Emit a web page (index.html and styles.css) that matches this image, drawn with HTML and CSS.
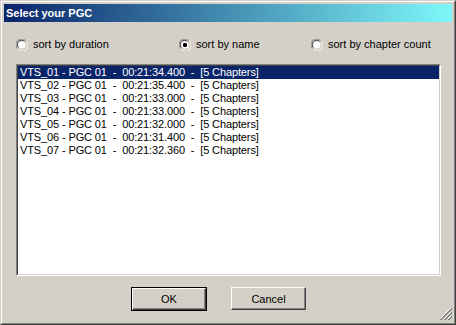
FILE: index.html
```html
<!DOCTYPE html>
<html lang="en">
<head>
  <meta charset="UTF-8" />
  <title>Select your PGC</title>
  <link rel="stylesheet" href="styles.css">
</head>
<body>
<div class="window">
  <div class="frame">
    <div class="titlebar">Select your PGC</div>
    <div class="content">
      <div class="sort-row">
        <label class="radio">
          <svg width="12" height="12" viewBox="0 0 12 12"><path d="M1.5 9.5 A5 5 0 0 1 9.5 1.5" fill="none" stroke="#808080"/><path d="M2.5 8.5 A3.6 3.6 0 0 1 8.5 2.5" fill="none" stroke="#404040"/><path d="M10.5 2.5 A5 5 0 0 1 2.5 10.5" fill="none" stroke="#fff"/><circle cx="6" cy="6" r="3.6" fill="#fff"/></svg>
          <span>sort by duration</span>
        </label>
        <label class="radio">
          <svg width="12" height="12" viewBox="0 0 12 12"><path d="M1.5 9.5 A5 5 0 0 1 9.5 1.5" fill="none" stroke="#808080"/><path d="M2.5 8.5 A3.6 3.6 0 0 1 8.5 2.5" fill="none" stroke="#404040"/><path d="M10.5 2.5 A5 5 0 0 1 2.5 10.5" fill="none" stroke="#fff"/><circle cx="6" cy="6" r="3.6" fill="#fff"/><rect x="4" y="4" width="4" height="4" rx="1.2" fill="#000"/></svg>
          <span>sort by name</span>
        </label>
        <label class="radio">
          <svg width="12" height="12" viewBox="0 0 12 12"><path d="M1.5 9.5 A5 5 0 0 1 9.5 1.5" fill="none" stroke="#808080"/><path d="M2.5 8.5 A3.6 3.6 0 0 1 8.5 2.5" fill="none" stroke="#404040"/><path d="M10.5 2.5 A5 5 0 0 1 2.5 10.5" fill="none" stroke="#fff"/><circle cx="6" cy="6" r="3.6" fill="#fff"/></svg>
          <span>sort by chapter count</span>
        </label>
      </div>

      <div class="listbox">
        <div class="list-inner">
          <div class="item selected">VTS_01 - PGC 01  -  00:21:34.400  -  [5 Chapters]</div>
          <div class="item">VTS_02 - PGC 01  -  00:21:35.400  -  [5 Chapters]</div>
          <div class="item">VTS_03 - PGC 01  -  00:21:33.000  -  [5 Chapters]</div>
          <div class="item">VTS_04 - PGC 01  -  00:21:33.000  -  [5 Chapters]</div>
          <div class="item">VTS_05 - PGC 01  -  00:21:32.000  -  [5 Chapters]</div>
          <div class="item">VTS_06 - PGC 01  -  00:21:31.400  -  [5 Chapters]</div>
          <div class="item">VTS_07 - PGC 01  -  00:21:32.360  -  [5 Chapters]</div>
        </div>
      </div>

      <div class="buttons">
        <div class="default-ring"><button class="btn">OK</button></div>
        <button class="btn cancel">Cancel</button>
      </div>

      <svg class="grip" width="12" height="12" viewBox="0 0 12 12">
        <path d="M11 0 L0 11 M11 4 L4 11 M11 8 L8 11" stroke="#fff" stroke-width="1"/>
        <path d="M12 0 L0 12 M12 1 L1 12 M12 4 L4 12 M12 5 L5 12 M12 8 L8 12 M12 9 L9 12" stroke="#808080" stroke-width="1"/>
      </svg>
    </div>
  </div>
</div>
</body>
</html>
```

FILE: styles.css
```css
html, body {
  margin: 0;
  padding: 0;
  background: #d4d0c8;
}
.window {
  width: 456px;
  height: 325px;
  box-sizing: border-box;
  border: 1px solid;
  border-color: #d4d0c8 #404040 #404040 #d4d0c8;
  font-family: Tahoma, "Liberation Sans", sans-serif;
  font-size: 11px;
  color: #000;
}
.frame {
  height: 100%;
  box-sizing: border-box;
  border: 1px solid;
  border-color: #fff #808080 #808080 #fff;
  padding: 2px;
  display: flex;
  flex-direction: column;
}
.titlebar {
  height: 18px;
  line-height: 18px;
  padding-left: 2px;
  color: #fff;
  font-weight: bold;
  background: linear-gradient(to right, #0a246a, #7ef8fa);
}
.content {
  flex: 1;
  position: relative;
  padding: 16px 10px 0 12px;
}
.sort-row {
  display: grid;
  grid-template-columns: 163px 132px auto;
  height: 13px;
}
.radio {
  display: flex;
  align-items: center;
  gap: 5px;
  line-height: 13px;
}
.radio svg {
  flex: none;
}
.listbox {
  margin-top: 13px;
  width: 425px;
  height: 212px;
  box-sizing: border-box;
  border: 1px solid;
  border-color: #808080 #fff #fff #808080;
  background: #fff;
}
.list-inner {
  height: 100%;
  box-sizing: border-box;
  border: 1px solid;
  border-color: #404040 #d4d0c8 #d4d0c8 #404040;
}
.item {
  height: 13px;
  line-height: 13px;
  padding-left: 2px;
  white-space: pre;
  letter-spacing: -0.12px;
}
.item.selected {
  background: #0a246a;
  color: #fff;
}
.buttons {
  display: flex;
  align-items: flex-start;
  gap: 24px;
  margin-top: 11px;
  padding-left: 115px;
}
.default-ring {
  border: 1px solid #000;
  display: flex;
}
.btn {
  width: 75px;
  height: 23px;
  margin: 0;
  padding: 0;
  font: inherit;
  color: #000;
  background: #d4d0c8;
  border: 1px solid;
  border-color: #fff #404040 #404040 #fff;
  box-shadow: inset -1px -1px 0 #808080, inset 1px 1px 0 #d4d0c8;
}
.default-ring .btn {
  width: 74px;
  height: 22px;
}
.grip {
  position: absolute;
  right: 0;
  bottom: 1px;
}
```
